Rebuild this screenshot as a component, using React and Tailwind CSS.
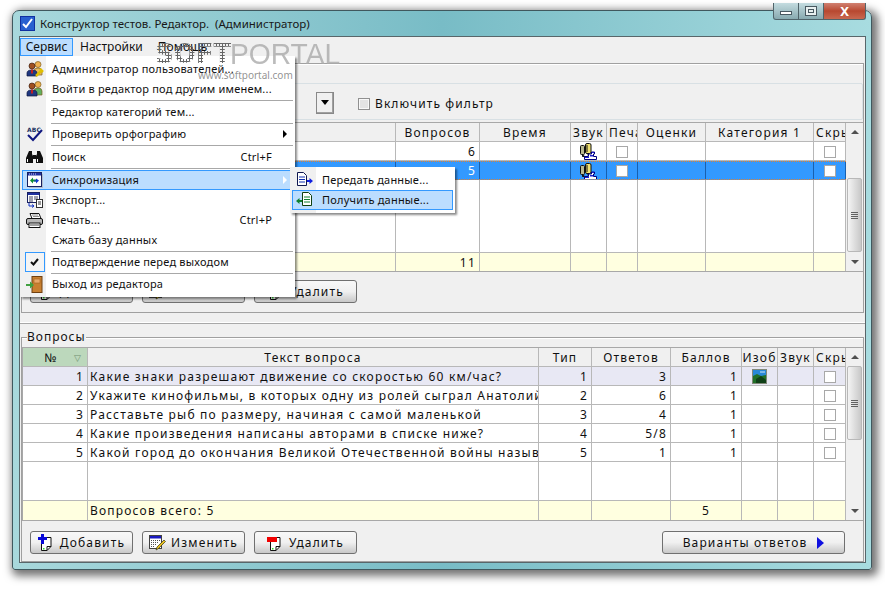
const font = { fontFamily: '"Noto Sans", sans-serif' };

const Check = () => <span className="block h-[12px] w-[12px] border border-[#a8a8a8] bg-white" />;

const People = ({ accent }) => (
  <svg width="18" height="18" viewBox="0 0 18 18">
    <circle cx="12" cy="4.500" r="3" fill="#f0b050" stroke="#806020" strokeWidth=".7" />
    <path d="M8 15 v-4 q0-3 4-3 q4 0 4 3 v4z" fill={accent ? "#e8b860" : "#60b060"} stroke="#806020" strokeWidth=".7" />
    <circle cx="6" cy="6" r="3" fill="#a05020" stroke="#402010" strokeWidth=".7" />
    <path d="M1 16 v-3 q0-3 5-3 q5 0 5 3 v3z" fill="#203880" stroke="#101840" strokeWidth=".7" />
    <rect x="5" y="9.500" width="2" height="4" fill="#c02020" />
    {accent && <path d="M10 16 l6-6 M14 9 l3 3" stroke="#e0c000" strokeWidth="2.500" />}
  </svg>
);

const Abc = () => (
  <svg width="18" height="18" viewBox="0 0 18 18">
    <text x="1" y="6.500" fontSize="6" fontWeight="700" fill="#203060" style={{ fontFamily: '"DejaVu Sans", sans-serif' }}>ABC</text>
    <path d="M2 10 L7 15 L16 5" fill="none" stroke="#101880" strokeWidth="2" />
  </svg>
);

const Binoculars = () => (
  <svg width="17" height="14" viewBox="0 0 17 14">
    <path d="M3 1h3v3l1 2v7H0V8zM11 1h3l3 7v5h-7V6l1-2zM7 5h3v4H7z" fill="#101010" />
    <path d="M1.500 9v3M11.500 9v3" stroke="#fff" strokeWidth="1" />
  </svg>
);

const Sync = () => (
  <svg width="16" height="16" viewBox="0 0 16 16">
    <rect x="2" y="2" width="14" height="14" fill="#a8a8a8" opacity=".6" />
    <rect x=".5" y=".5" width="14" height="14" fill="#fff" stroke="#182060" />
    <rect x="1" y="1" width="13" height="2.500" fill="#2030a0" />
    <path d="M2 2h1M4 2h1M6 2h1M8 2h1" stroke="#fff" strokeWidth=".8" />
    <path d="M3 8.500l3-3v2h3v2H6v2z" fill="#109030" />
    <path d="M12 8.500l-3 3v-2H7v-1h2v-2z" fill="#1038d0" />
  </svg>
);

const ExportIcon = () => (
  <svg width="16" height="16" viewBox="0 0 16 16">
    <rect x=".5" y=".5" width="12" height="10" fill="#fff" stroke="#182060" />
    <rect x="1" y="1" width="11" height="2" fill="#2030a0" />
    <path d="M2 5h4M7 5h4M2 7h4M7 7h4M2 9h4" stroke="#404060" />
    <rect x="9.500" y="7.500" width="6" height="8" fill="#fff" stroke="#303030" />
    <path d="M11 10h3M11 12h3" stroke="#303030" />
    <path d="M2 11v3h5M5 12.500l2 1.500-2 1.500" fill="none" stroke="#1030c0" />
  </svg>
);

const Printer = () => (
  <svg width="17" height="15" viewBox="0 0 17 15">
    <path d="M4 .5h9l2 5H6z" fill="#fff" stroke="#101010" />
    <path d="M6 2h6M7 3.500h6" stroke="#606060" strokeWidth=".7" />
    <rect x=".5" y="5.500" width="16" height="6" rx="1.500" fill="#b8b8b8" stroke="#101010" />
    <rect x="3" y="10" width="11" height="4.500" fill="#fff" stroke="#101010" />
    <path d="M4 12h9" stroke="#404040" />
  </svg>
);

const Door = () => (
  <svg width="17" height="17" viewBox="0 0 17 17">
    <rect x="6" y=".5" width="10" height="16" fill="#c88030" stroke="#704010" />
    <rect x="8" y="3" width="6" height="4" fill="#e8a868" stroke="#a06020" strokeWidth=".6" />
    <path d="M0 8h4V5.500L8 9l-4 3.500V10H0z" fill="#40a040" />
  </svg>
);

const PageArrow = ({ left }) => (
  <svg width="18" height="16" viewBox="0 0 18 16">
    <g transform={left ? "translate(6 0)" : "translate(1 0)"}>
      <path d="M.5.500h6l3 3v10h-9z" fill="#fff" stroke={left ? "#104010" : "#101850"} />
      <path d="M2 5h6M2 7.500h6M2 10h6" stroke={left ? "#108030" : "#1030b0"} />
    </g>
    {left
      ? <path d="M0 9l3.500-3v2H6v2H3.500v2z" fill="#108030" />
      : <path d="M17 9l-3.500-3v2H11v2h2.500v2z" fill="#1020e0" />}
  </svg>
);

const Sound = () => (
  <svg width="17" height="17" viewBox="0 0 17 17">
    <rect x=".5" y="2.500" width="4" height="9" rx="1" fill="#b8b890" stroke="#101010" />
    <rect x="5.500" y=".5" width="5.500" height="10" rx="1.500" fill="#f0e070" stroke="#101010" />
    <path d="M7 2v7" stroke="#101010" />
    <path d="M2.500 11.500v2h3M8 10.500v2" stroke="#101010" />
    <path d="M4.500 16.500v-3h4v-2.500h3v-2h3v2h-1v2.500h3v3z" fill="#fff" stroke="#000080" />
    <path d="M10 12h3v1.500h-3zM5 14h4v1H5zM12 9h2v1h-2z" fill="#2020d0" />
  </svg>
);

const Picture = () => (
  <svg width="15" height="15" viewBox="0 0 15 15">
    <rect x=".5" y=".5" width="14" height="14" fill="#2888d8" stroke="#808878" />
    <path d="M1 7l4-2 4 2 5-1v8H1z" fill="#207028" />
    <path d="M4 10l5-3 5 4v3H4z" fill="#104018" />
    <path d="M8 3h5" stroke="#d0e8f8" />
  </svg>
);

const BtnPage = ({ children }) => (
  <svg width="17" height="18" viewBox="0 0 17 18">
    <path d="M3.500 3.500h9.500v9l-4 4H3.500z" fill="#fff" stroke="#101010" />
    <path d="M9 16.500v-4h4" fill="none" stroke="#101010" />
    <rect x="5" y="14" width="1.500" height="1.500" fill="#30e030" />
    {children}
  </svg>
);

const AddIcon = () => (
  <BtnPage><path d="M3 0h3v3h3v3H6v4H3V6H0V3h3z" fill="#0808d8" /></BtnPage>
);

const DelIcon = () => (
  <BtnPage><rect x="0" y="3" width="10" height="5" fill="#f00000" /></BtnPage>
);

const EditIcon = () => (
  <svg width="17" height="16" viewBox="0 0 17 16">
    <rect x=".5" y=".5" width="12" height="13" fill="#fff" stroke="#404040" />
    <rect x="1" y="1" width="11" height="2.500" fill="#1818c0" />
    <path d="M2 5.500h9M2 7.500h7M2 9.500h5M2 11.500h4" stroke="#505050" strokeDasharray="1 1" />
    <path d="M7 15l1-3 7-7 1.500 1.500-7 7z" fill="#e8c020" stroke="#303010" strokeWidth=".7" />
  </svg>
);

const MenuRow = ({ icon, label, shortcut, arrow, sel }) => (
  <div className={`mx-[2px] flex h-[20px] items-center border ${sel ? "border-[#3399ff] bg-[#bbddff]" : "border-transparent"}`}>
    <span className="flex h-full w-[23px] shrink-0 items-center justify-center">{icon}</span>
    <span className="ml-[6px] flex-1 whitespace-nowrap">{label}</span>
    {shortcut && <span className="mr-[20px]">{shortcut}</span>}
    {arrow && (
      <span className={`mr-[5px] h-0 w-0 border-y-[4px] border-l-[4px] border-y-transparent ${sel ? "border-l-white" : "border-l-black"}`} />
    )}
  </div>
);

const MenuSep = ({ tight }) => <div className={`ml-[31px] mr-[2px] mt-[1px] h-[1px] bg-[#a8a8a8] ${tight ? "" : "mb-[1px]"}`} />;

const Tick = () => (
  <span className="flex h-[20px] w-[20px] items-center justify-center border border-[#3399ff] bg-[#f4f4f4]">
    <svg width="9" height="8" viewBox="0 0 9 8"><path d="M1 4l2.500 2.500L8 1" fill="none" stroke="#101010" strokeWidth="2" /></svg>
  </span>
);

const ServiceMenu = () => (
  <div className="absolute left-[20px] top-[56px] z-20 flex h-[241px] w-[275px] flex-col bg-white pt-[3px] text-[11px] tracking-[0.2px] text-[#101010] shadow-[2px_2px_2px_rgba(0,0,0,0.45)]">
    <div className="absolute inset-y-0 left-0 w-[26px] bg-[#f0f0f0]" />
    <div className="relative flex flex-col">
      <MenuRow icon={<People accent />} label="Администратор пользователей..." />
      <MenuRow icon={<People />} label="Войти в редактор под другим именем..." />
      <MenuSep />
      <MenuRow label="Редактор категорий тем..." />
      <MenuSep tight />
      <MenuRow icon={<Abc />} label="Проверить орфографию" arrow />
      <MenuSep />
      <MenuRow icon={<Binoculars />} label="Поиск" shortcut="Ctrl+F" />
      <MenuSep />
      <MenuRow icon={<Sync />} label="Синхронизация" arrow sel />
      <MenuRow icon={<ExportIcon />} label="Экспорт..." />
      <MenuRow icon={<Printer />} label="Печать..." shortcut="Ctrl+P" />
      <MenuRow label="Сжать базу данных" />
      <MenuSep tight />
      <MenuRow icon={<Tick />} label="Подтверждение перед выходом" />
      <MenuSep tight />
      <MenuRow icon={<Door />} label="Выход из редактора" />
    </div>
  </div>
);

const SyncSubmenu = () => (
  <div className="absolute left-[290px] top-[167px] z-30 flex h-[46px] w-[165px] flex-col bg-white pt-[3px] text-[11px] tracking-[0.2px] text-[#101010] shadow-[2px_2px_2px_rgba(0,0,0,0.45)]">
    <div className="absolute inset-y-0 left-0 w-[26px] bg-[#f0f0f0]" />
    <div className="relative flex flex-col">
      <MenuRow icon={<PageArrow />} label="Передать данные..." />
      <MenuRow icon={<PageArrow left />} label="Получить данные..." sel />
    </div>
  </div>
);

const ScrollBar = ({ gap }) => (
  <div className="flex w-[17px] shrink-0 flex-col items-center bg-[#f0f0f0]">
    <div className="flex h-[18px] items-center">
      <span className="h-0 w-0 border-x-[4px] border-b-[4px] border-x-transparent border-b-[#505050]" />
    </div>
    <div className={gap} />
    <div className="flex h-[74px] w-[15px] flex-col items-center justify-center gap-[1px] rounded-[2px] border border-[#b8b8b8] bg-gradient-to-r from-[#f4f4f4] to-[#c8c8c8]">
      {[1, 2, 3, 4].map((g) => <span key={g} className="h-[1px] w-[7px] bg-[#606060]" />)}
    </div>
    <div className="flex-1" />
    <div className="flex h-[18px] items-center">
      <span className="h-0 w-0 border-x-[4px] border-t-[4px] border-x-transparent border-t-[#505050]" />
    </div>
  </div>
);

const Row = ({ cols, cells = [], className = "", aligns = [], dividers = "border-[#b8b8b8]", height = "h-[19px]" }) => (
  <div className={`flex shrink-0 border-[#b8b8b8] ${height} ${className}`}>
    {cols.map((w, i) => (
      <div
        key={i}
        style={{ width: w }}
        className={`flex shrink-0 items-center overflow-hidden whitespace-nowrap border-r px-[2px] pt-[1px] ${dividers} ${aligns[i] || "justify-center"}`}
      >
        {cells[i]}
      </div>
    ))}
  </div>
);

const topCols = [373, 84, 91, 36, 31, 68, 108, 32];
const topAligns = ["", "justify-end pr-[3px]"];
const topHeadAligns = ["", "", "", "", "justify-start", "", "", "justify-start"];

const TopGrid = () => (
  <div className="mt-[2px] flex h-[150px] border-y border-l border-[#a8a8a8] bg-white text-[12px] tracking-[1.2px] text-[#101010]">
    <div className="flex w-[823px] shrink-0 flex-col">
      <Row cols={topCols} aligns={topHeadAligns} className="border-b bg-[#f0f0f0]" cells={["", "Вопросов", "Время", "Звук", "Печать", "Оценки", "Категория 1", "Скрыт"]} />
      <Row cols={topCols} className="border-b" aligns={topAligns} cells={["", "6", "", <Sound />, <Check />, "", "", <Check />]} />
      <Row
        cols={topCols}
        aligns={topAligns}
        className="border-y border-dotted border-[#e08030] bg-[#3399ff] text-white"
        dividers="border-[#1860b0]"
        cells={["", "5", "", <Sound />, <Check />, "", "", <Check />]}
      />
      <Row cols={topCols} height="flex-1" className="min-h-0 border-b" />
      <Row cols={topCols} height="h-[18px]" aligns={topAligns} className="bg-[#ffffe0]" cells={["", "11"]} />
    </div>
    <ScrollBar gap="h-[37px]" />
  </div>
);

const qCols = [65, 451, 53, 79, 71, 36, 36, 32];
const qAligns = ["justify-end pr-[3px]", "justify-start", "justify-end pr-[3px]", "justify-end pr-[3px]", "justify-end pr-[3px]"];
const qHeadAligns = ["relative justify-center bg-[#bcd8bc] pr-[10px]", "", "", "", "", "", "", "justify-start"];

const SortedHead = () => (
  <>
    №
    <span className="absolute right-[5px] top-[5px] text-[9px] leading-none text-[#709070]">▽</span>
  </>
);

const questions = [
  ["1", "Какие знаки разрешают движение со скоростью 60 км/час?", "1", "3", "1"],
  ["2", "Укажите кинофильмы, в которых одну из ролей сыграл Анатолий Папанов", "2", "6", "1"],
  ["3", "Расставьте рыб по размеру, начиная с самой маленькой", "3", "4", "1"],
  ["4", "Какие произведения написаны авторами в списке ниже?", "4", "5/8", "1"],
  ["5", "Какой город до окончания Великой Отечественной войны назывался", "5", "1", "1"],
];

const QuestionGrid = () => (
  <div className="mt-[9px] flex h-[174px] border-y border-l border-[#a8a8a8] bg-white text-[12px] tracking-[1.2px] text-[#101010]">
    <div className="flex w-[823px] shrink-0 flex-col">
      <Row
        cols={qCols}
        aligns={qHeadAligns}
        className="border-b bg-[#f0f0f0]"
        cells={[<SortedHead />, "Текст вопроса", "Тип", "Ответов", "Баллов", "Изоб", "Звук", "Скрыт"]}
      />
      {questions.map((q, i) => (
        <Row
          key={q[0]}
          cols={qCols}
          aligns={qAligns}
          className={`border-b ${i === 0 ? "bg-[#e8e8f4]" : ""}`}
          cells={[...q, i === 0 ? <Picture /> : "", "", <Check />]}
        />
      ))}
      <Row cols={qCols} height="flex-1" className="min-h-0 border-b" />
      <Row cols={qCols} height="h-[19px]" aligns={["", "justify-start"]} className="bg-[#ffffe0]" cells={["", "Вопросов всего: 5", "", "", "5"]} />
    </div>
    <ScrollBar gap="h-0" />
  </div>
);

const Btn = ({ icon, label, className = "w-[103px]", after }) => (
  <button
    type="button"
    className={`flex h-[23px] items-center justify-center gap-[5px] rounded-[3px] border border-[#707070] bg-gradient-to-b from-[#f8f8f8] via-[#f0f0f0] to-[#c8c8c8] text-[12px] tracking-[1.15px] text-[#101010] ${className}`}
  >
    {icon}
    <span>{label}</span>
    {after}
  </button>
);

const Buttons = ({ extra, top }) => (
  <div className={`mx-[8px] flex gap-[9px] ${top}`}>
    <Btn icon={<AddIcon />} label="Добавить" />
    <Btn icon={<EditIcon />} label="Изменить" />
    <Btn icon={<DelIcon />} label="Удалить" />
    {extra}
  </div>
);

const Watermark = () => (
  <div className="pointer-events-none absolute left-[155px] top-[39px] z-40 h-[44px] w-[190px]">
    <span className="absolute left-0 top-0 bg-[radial-gradient(circle,#666_55%,transparent_60%)] bg-[length:3px_3px] bg-clip-text text-[26px] font-bold leading-[30px] text-transparent [font-family:'DejaVu_Sans',sans-serif]">
      SOFT
    </span>
    <span className="absolute left-[75px] top-0 origin-left scale-x-[0.94] text-[30px] leading-[30px] text-[#aaa]/80 [font-family:'Liberation_Sans',sans-serif]">
      PORTAL
    </span>
    <div className="absolute left-[43px] top-[29px] text-[10px] leading-[14px] text-[#777]/80">www.softportal.com</div>
  </div>
);

export default function App() {
  return (
    <div className="relative h-[589px] w-[885px] overflow-hidden bg-white" style={font}>
      <div className="ml-[12px] mt-[10px] inline-flex h-[560px] w-[860px] flex-col rounded-t-[7px] rounded-b-[3px] border border-[#40585e] bg-gradient-to-r from-[#a8d8dc] via-[#78bcc6] to-[#a8dce0] pb-[6px] pl-[6px] pr-[5px] shadow-[3px_3px_9px_3px_rgba(0,0,0,0.55)]">
        <div className="flex h-[25px] shrink-0 items-center">
          <span className="ml-[1px] flex h-[15px] w-[15px] items-center justify-center border border-[#1030a0] bg-[#2860d0]">
            <svg width="13" height="13" viewBox="0 0 13 13">
              <rect width="13" height="13" fill="#2860d0" />
              <path d="M2 7l3 3 6-8" fill="none" stroke="#fff" strokeWidth="2" />
            </svg>
          </span>
          <span className="ml-[5px] flex-1 whitespace-pre text-[11.5px] text-[#181818]">Конструктор тестов. Редактор.  (Администратор)</span>
          <div className="-mt-[8px] flex h-[18px] items-start self-start">
            <div className="flex h-[17px] w-[26px] items-center justify-center rounded-bl-[3px] border border-t-0 border-[#50646a] bg-gradient-to-b from-[#c4dce0] to-[#88aab0]">
              <span className="mt-[3px] h-[4px] w-[12px] border border-[#485860] bg-white" />
            </div>
            <div className="flex h-[17px] w-[25px] items-center justify-center border-b border-r border-[#50646a] bg-gradient-to-b from-[#c4dce0] to-[#88aab0]">
              <span className="flex h-[10px] w-[12px] items-center justify-center border border-[#485860] bg-[#e8f0f0]">
                <span className="h-[4px] w-[6px] border border-[#485860]" />
              </span>
            </div>
            <div className="flex h-[17px] w-[42px] items-center justify-center rounded-br-[3px] border-b border-r border-[#50646a] bg-gradient-to-b from-[#d08070] via-[#b84830] to-[#c86850] text-[13px] font-bold leading-none text-white">
              X
            </div>
          </div>
        </div>

        <div className="flex min-h-0 flex-1 flex-col border border-[#58666a] bg-[#f0f0f0]">
          <div className="flex h-[19px] shrink-0 items-center text-[12px] text-[#101010]">
            <span className="flex h-[18px] w-[53px] items-center justify-center border border-[#3399ff] bg-[#bbddff]">Сервис</span>
            <span className="ml-[7px]">Настройки</span>
            <span className="ml-[15px]">Помощь</span>
          </div>

          <div className="mx-[1px] mt-[7px] flex h-[250px] shrink-0 flex-col border border-[#a0a0a0] shadow-[inset_0_1px_0_#fff]">
            <div className="mt-[19px] flex h-[37px] shrink-0 items-center rounded-[2px] border border-[#d8e0e4] pt-[2px] text-[12px] tracking-[1.1px] text-[#101010]">
              <span className="ml-[293px] flex h-[22px] w-[18px] items-center justify-center border border-[#888] bg-[#f0f0f0] shadow-[inset_-1px_-1px_0_#a0a0a0]">
                <span className="h-0 w-0 border-x-[4px] border-t-[5px] border-x-transparent border-t-black" />
              </span>
              <span className="ml-[24px] mt-[2px] h-[12px] w-[12px] border border-[#909090] bg-[#e4e4e4] shadow-[inset_0_0_0_1px_#f8f8f8]" />
              <span className="ml-[5px] mt-[3px]">Включить фильтр</span>
            </div>
            <TopGrid />
            <Buttons top="mt-[8px]" />
          </div>

          <div className="mt-[9px] h-[1px] shrink-0 bg-white" />
          <div className="h-[1px] shrink-0 bg-[#a8a8a8]" />

          <div className="relative mx-[1px] mt-[13px] flex min-h-0 flex-1 flex-col border border-[#a0a0a0] shadow-[inset_0_1px_0_#fff]">
            <span className="absolute -top-[8px] left-[5px] bg-[#f0f0f0] text-[12px] leading-[14px] tracking-[1px] text-[#101010]">Вопросы</span>
            <QuestionGrid />
            <Buttons
              top="mt-[10px]"
              extra={
                <Btn
                  className="ml-auto mr-[10px] w-[183px]"
                  label="Варианты ответов"
                  after={<span className="ml-[5px] h-0 w-0 border-y-[6px] border-l-[7px] border-y-transparent border-l-[#1010e0]" />}
                />
              }
            />
          </div>
        </div>
      </div>
      <ServiceMenu />
      <SyncSubmenu />
      <Watermark />
    </div>
  );
}
